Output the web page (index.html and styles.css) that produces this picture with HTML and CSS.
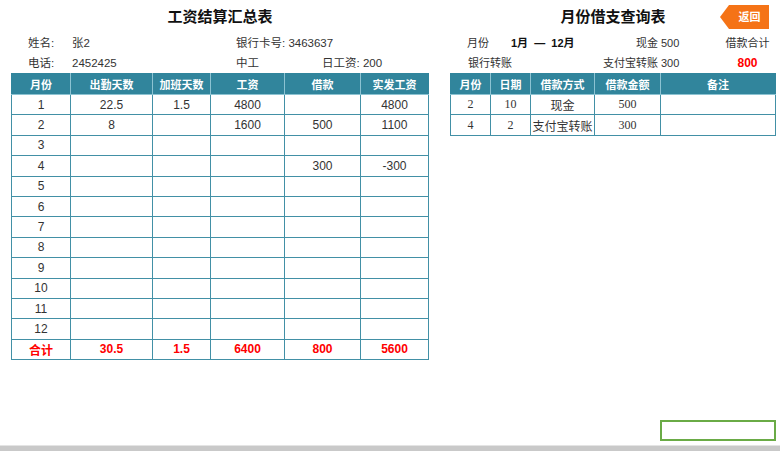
FILE: index.html
```html
<!DOCTYPE html>
<html>
	<head>
		<meta charset="utf-8" />
		<title>工资结算汇总表</title>
		<link rel="stylesheet" href="styles.css">
	</head>
	<body>
	<div class="page">
		<div class="panel left">
			<h1 class="title">工资结算汇总表</h1>
			<div class="info">
				<span class="lab">姓名:</span><span class="val">张2</span><span>银行卡号: 3463637</span>
			</div>
			<div class="info">
				<span class="lab">电话:</span><span class="val">2452425</span><span class="grade">中工</span><span>日工资: 200</span>
			</div>
			<table class="grid salary">
				<colgroup>
					<col style="width:59px"><col style="width:82px"><col style="width:58px">
					<col style="width:74px"><col style="width:76px"><col style="width:68px">
				</colgroup>
				<tr class="head"><th>月份</th><th>出勤天数</th><th>加班天数</th><th>工资</th><th>借款</th><th>实发工资</th></tr>
				<tr><td>1</td><td>22.5</td><td>1.5</td><td>4800</td><td></td><td>4800</td></tr>
				<tr><td>2</td><td>8</td><td></td><td>1600</td><td>500</td><td>1100</td></tr>
				<tr><td>3</td><td></td><td></td><td></td><td></td><td></td></tr>
				<tr><td>4</td><td></td><td></td><td></td><td>300</td><td>-300</td></tr>
				<tr><td>5</td><td></td><td></td><td></td><td></td><td></td></tr>
				<tr><td>6</td><td></td><td></td><td></td><td></td><td></td></tr>
				<tr><td>7</td><td></td><td></td><td></td><td></td><td></td></tr>
				<tr><td>8</td><td></td><td></td><td></td><td></td><td></td></tr>
				<tr><td>9</td><td></td><td></td><td></td><td></td><td></td></tr>
				<tr><td>10</td><td></td><td></td><td></td><td></td><td></td></tr>
				<tr><td>11</td><td></td><td></td><td></td><td></td><td></td></tr>
				<tr><td>12</td><td></td><td></td><td></td><td></td><td></td></tr>
				<tr class="total"><td>合计</td><td>30.5</td><td>1.5</td><td>6400</td><td>800</td><td>5600</td></tr>
			</table>
		</div>

		<div class="panel right">
			<h1 class="title">月份借支查询表</h1>
			<a href="#" class="back">返回</a>
			<div class="info info-r">
				<span class="lab">月份</span><span class="range">1月 &nbsp;—&nbsp; 12月</span><span class="kind">现金</span><span class="num">500</span><span class="sum">借款合计</span>
			</div>
			<div class="info info-r">
				<span class="lab bank">银行转账</span><span class="range"></span><span class="kind">支付宝转账</span><span class="num">300</span><span class="sum red">800</span>
			</div>
			<table class="grid loan">
				<colgroup>
					<col style="width:40px"><col style="width:40px"><col style="width:64px">
					<col style="width:66px"><col style="width:115px">
				</colgroup>
				<tr class="head"><th>月份</th><th>日期</th><th>借款方式</th><th>借款金额</th><th>备注</th></tr>
				<tr><td>2</td><td>10</td><td>现金</td><td>500</td><td></td></tr>
				<tr><td>4</td><td>2</td><td>支付宝转账</td><td>300</td><td></td></tr>
			</table>
		</div>
	</div>
	<div class="pick"></div>
	<div class="scroll"></div>
	</body>
</html>
```

FILE: styles.css
```css
*{margin: 0;padding: 0;box-sizing: border-box;}
html,body{width: 780px;height: 451px;overflow: hidden;background: #fff;}
body{font-family: "Liberation Sans","Noto Sans CJK SC",sans-serif;font-size: 11.5px;color: #333;position: relative;}
.page{display: flex;gap: 21px;padding-left: 11px;}
.panel{position: relative;}
.left{width: 418px;}
.right{width: 326px;}
.title{height: 33px;line-height: 33px;text-align: center;font-size: 15px;font-weight: bold;color: #111;}
.info{display: flex;height: 20px;line-height: 20px;padding-left: 17px;white-space: nowrap;}
.info .lab{width: 44px;}
.info .val{width: 164px;}
.info .grade{width: 86px;}
/* 右侧信息栏 */
.info-r{font-size: 11px;}
.info-r .lab{width: 44px;}
.info-r .lab.bank{padding-left: 1px;}
.info-r .range{width: 92px;font-weight: bold;color: #111;}
.info-r .kind{width: 58px;text-align: right;padding-right: 3px;}
.info-r .num{width: 64px;}
.info-r .sum{width: 45px;text-align: center;}
.red{color: #ff0000;font-weight: bold;font-size: 12px;}
.back{position: absolute;right: 7px;top: 5px;width: 49px;height: 24px;line-height: 24px;padding-left: 10px;
	text-align: center;color: #fff;text-decoration: none;font-size: 11px;font-weight: bold;background: #f57316;
	clip-path: polygon(9px 0,100% 0,100% 100%,9px 100%,0 50%);}
/* 表格 */
.grid{border-collapse: collapse;table-layout: fixed;}
.salary{width: 418px;}
.loan{width: 326px;}
.grid th,.grid td{border: 1px solid #4290a6;text-align: center;height: 20.4px;padding: 0;font-size: 12px;color: #333;}
.grid .head th{background: #31859c;color: #fff;font-size: 11px;font-weight: bold;height: 21px;border-color: #8cc3d2;border-top-color: #31859c;}
.grid .head th:first-child{border-left-color: #31859c;}
.grid .head th:last-child{border-right-color: #31859c;}
.total td{color: #ff0000;font-weight: bold;font-size: 12px;}
.loan td{font-family: "Liberation Serif","Noto Sans CJK SC",serif;font-size: 12px;}
.loan td:nth-child(3){font-family: "Noto Sans CJK SC",sans-serif;font-size: 12px;}
.pick{position: absolute;left: 660px;top: 420px;width: 116px;height: 21px;border: 2px solid #6aab46;}
.scroll{position: absolute;left: 0;bottom: 0;width: 780px;height: 6px;background: #c9c9c9;border-top: 1px solid #e4e4e4;}
```
